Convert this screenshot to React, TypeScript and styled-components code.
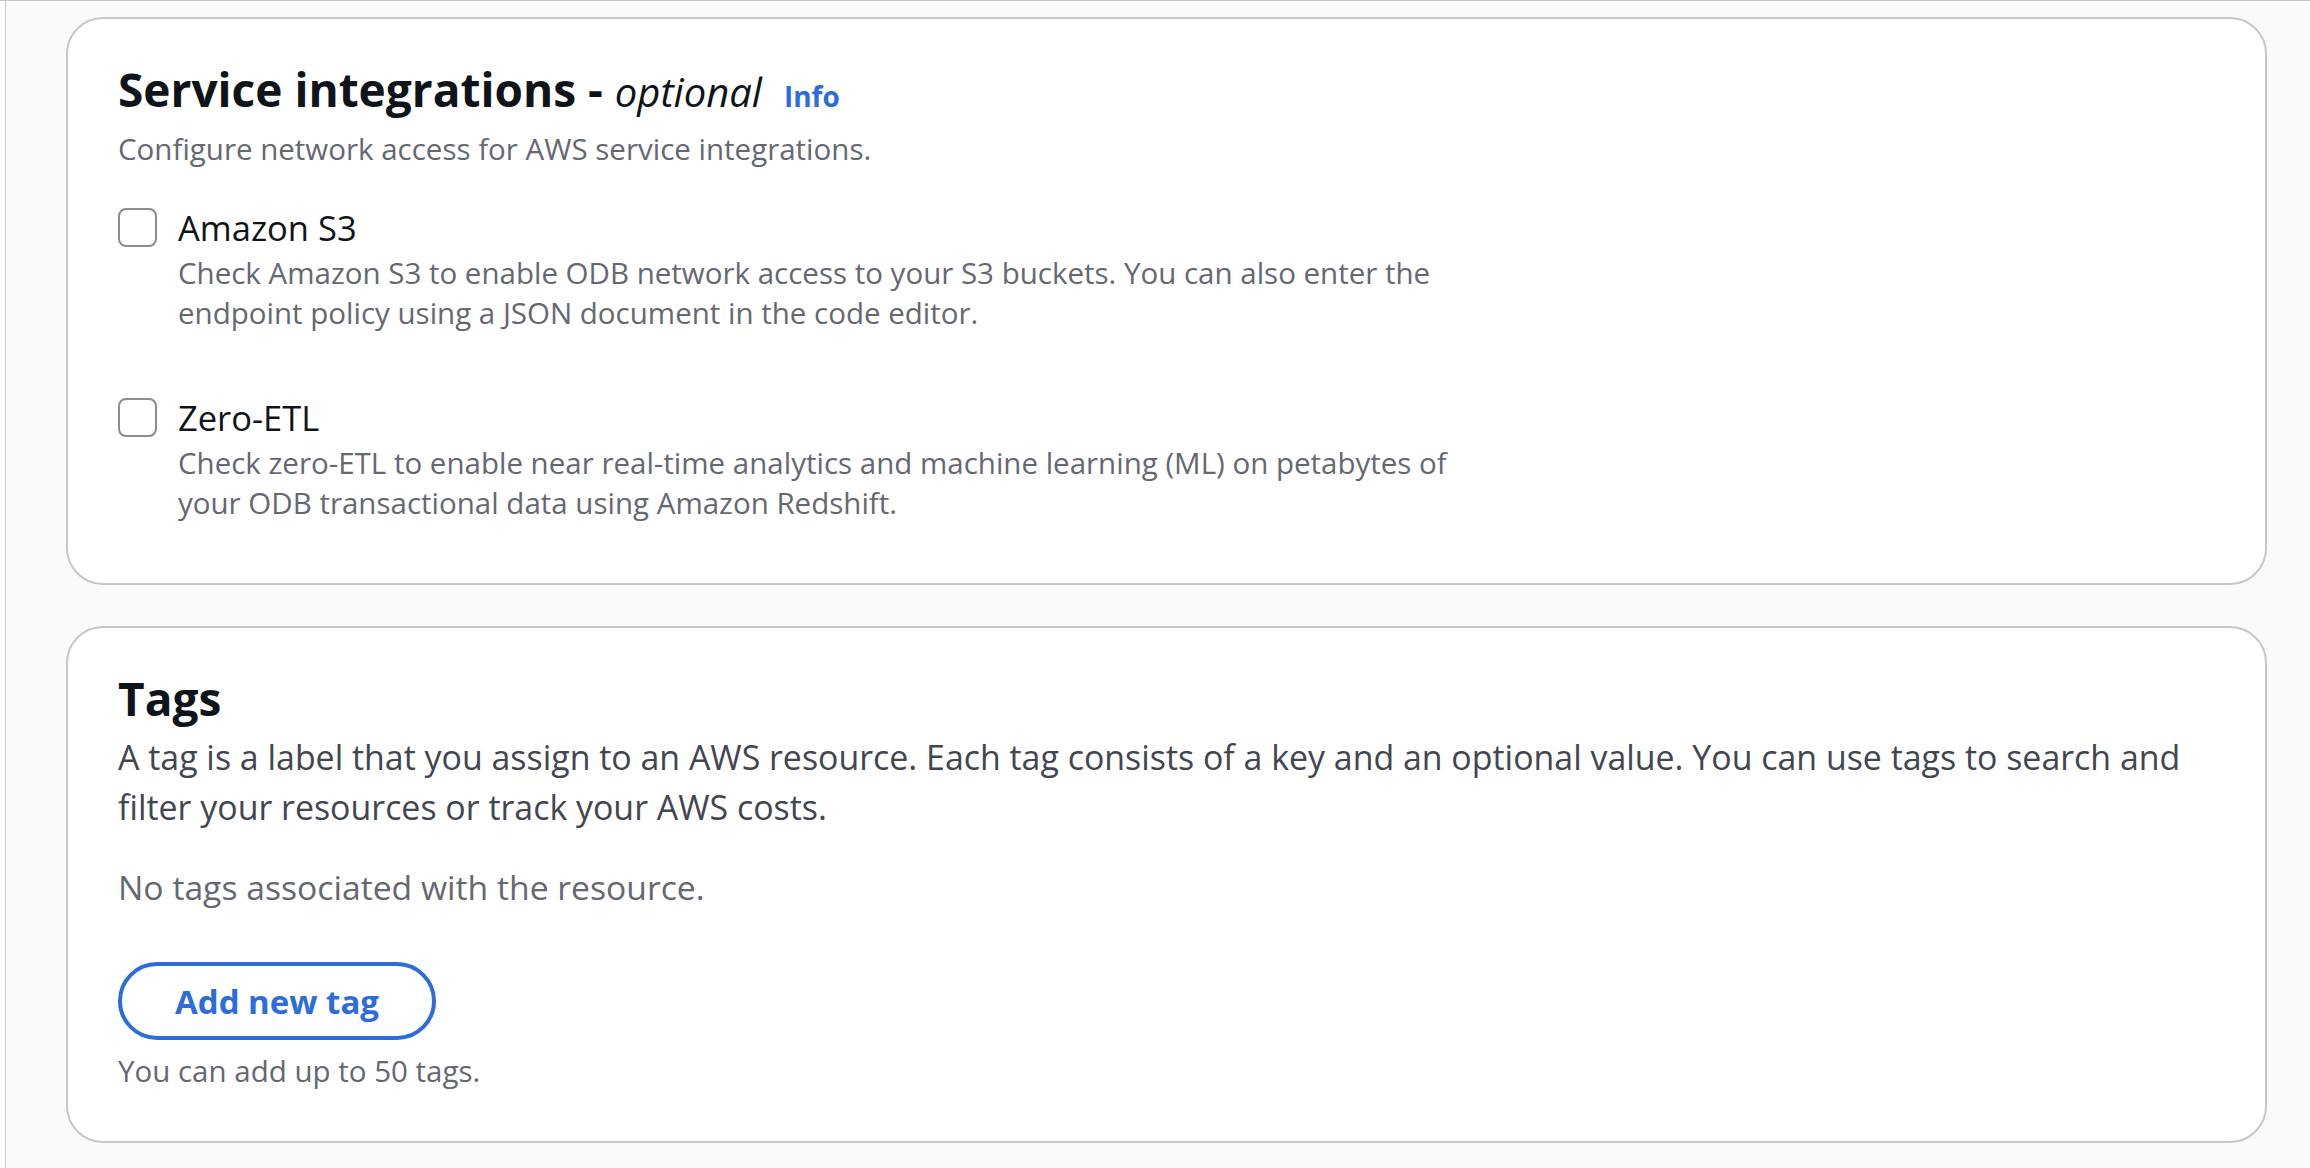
import styled, { createGlobalStyle } from "styled-components";

const GlobalStyle = createGlobalStyle`
  * { box-sizing: border-box; }
  body {
    margin: 0;
    background: #ffffff;
    font-family: "Open Sans", "Noto Sans", sans-serif;
    color: #0f141a;
  }
`;

const Shell = styled.div`
  min-height: 100vh;
  border-top: 1px solid #c6c6cd;
  padding-left: 5px;
  display: flex;
`;

const Main = styled.main`
  flex: 1;
  border-left: 1px solid #c6c6cd;
  background: #fafafa;
  padding: 16px 43px 24px 60px;
  display: flex;
  flex-direction: column;
  gap: 41px;
`;

const Card = styled.section<{ $top: number; $bottom: number }>`
  background: #ffffff;
  border: 2px solid #c6c6cd;
  border-radius: 37px;
  padding: ${(p) => p.$top}px 50px ${(p) => p.$bottom}px 50px;
  display: flex;
  flex-direction: column;
`;

const Heading = styled.h2`
  margin: 0;
  font-size: 46px;
  line-height: 56px;
  font-weight: 700;
  color: #0f141a;
`;

const Optional = styled.i`
  font-size: 40px;
  font-weight: 400;
  font-style: italic;
`;

const InfoLink = styled.a`
  margin-left: 22px;
  font-size: 28px;
  font-weight: 700;
  color: #2d6cdb;
  text-decoration: none;
  cursor: pointer;
`;

const Description = styled.p<{ $big?: boolean; $gap: number }>`
  margin: ${(p) => p.$gap}px 0 0;
  font-size: ${(p) => (p.$big ? 33.9 : 29.5)}px;
  line-height: ${(p) => (p.$big ? 50 : 40)}px;
  color: ${(p) => (p.$big ? "#424650" : "#656871")};
`;

const CheckList = styled.div`
  margin-top: 34px;
  display: flex;
  flex-direction: column;
  gap: 60px;
`;

const CheckRow = styled.label`
  display: flex;
  align-items: flex-start;
  gap: 21px;
  cursor: pointer;
`;

const Box = styled.span`
  flex: none;
  width: 39px;
  height: 39px;
  margin-top: 5px;
  border: 2.5px solid #8c8c94;
  border-radius: 8px;
  background: #ffffff;
`;

const CheckText = styled.div`
  display: flex;
  flex-direction: column;
  max-width: 1300px;
`;

const CheckLabel = styled.span`
  font-size: 34.5px;
  line-height: 50px;
  color: #0f141a;
`;

const CheckDesc = styled.span`
  font-size: 29.5px;
  line-height: 40px;
  color: #656871;
`;

const Muted = styled.p<{ $size: number; $lh: number; $gap: number }>`
  margin: ${(p) => p.$gap}px 0 0;
  font-size: ${(p) => p.$size}px;
  line-height: ${(p) => p.$lh}px;
  color: #656871;
`;

const OutlineButton = styled.button`
  align-self: flex-start;
  margin-top: 51px;
  height: 78px;
  padding: 0 53px;
  border: 4px solid #2d6cdb;
  border-radius: 39px;
  background: #ffffff;
  color: #2d6cdb;
  font-family: "Open Sans", sans-serif;
  font-size: 33px;
  line-height: 47px;
  font-weight: 700;
  cursor: pointer;
`;

const integrations = [
  {
    label: "Amazon S3",
    desc: "Check Amazon S3 to enable ODB network access to your S3 buckets. You can also enter the endpoint policy using a JSON document in the code editor.",
  },
  {
    label: "Zero-ETL",
    desc: "Check zero-ETL to enable near real-time analytics and machine learning (ML) on petabytes of your ODB transactional data using Amazon Redshift.",
  },
];

export default function App() {
  return (
    <>
      <GlobalStyle />
      <Shell>
        <Main>
          <Card $top={42} $bottom={60}>
            <Heading>
              Service integrations - <Optional>optional</Optional>
              <InfoLink>Info</InfoLink>
            </Heading>
            <Description $gap={5}>Configure network access for AWS service integrations.</Description>
            <CheckList>
              {integrations.map((item) => (
                <CheckRow key={item.label}>
                  <Box />
                  <CheckText>
                    <CheckLabel>{item.label}</CheckLabel>
                    <CheckDesc>{item.desc}</CheckDesc>
                  </CheckText>
                </CheckRow>
              ))}
            </CheckList>
          </Card>

          <Card $top={42} $bottom={50}>
            <Heading>Tags</Heading>
            <Description $big $gap={6}>
              A tag is a label that you assign to an AWS resource. Each tag consists of a key and an optional value. You can use tags to search and filter your resources or track your AWS costs.
            </Description>
            <Muted $size={33.7} $lh={47} $gap={32}>No tags associated with the resource.</Muted>
            <OutlineButton>Add new tag</OutlineButton>
            <Muted $size={29.5} $lh={40} $gap={11}>You can add up to 50 tags.</Muted>
          </Card>
        </Main>
      </Shell>
    </>
  );
}
